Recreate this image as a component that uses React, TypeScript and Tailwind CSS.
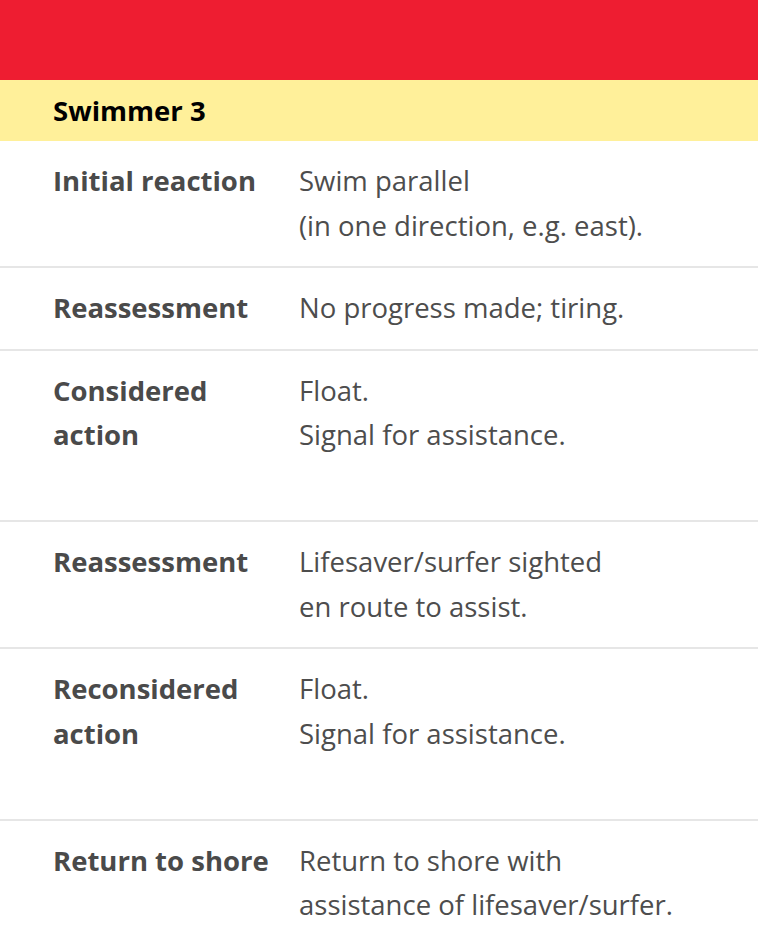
const rows: { label: string; lines: string[] }[] = [
  { label: 'Initial reaction', lines: ['Swim parallel', '(in one direction, e.g. east).'] },
  { label: 'Reassessment', lines: ['No progress made; tiring.'] },
  { label: 'Considered action', lines: ['Float.', 'Signal for assistance.', ''] },
  { label: 'Reassessment', lines: ['Lifesaver/surfer sighted', 'en route to assist.'] },
  { label: 'Reconsidered action', lines: ['Float.', 'Signal for assistance.', ''] },
  { label: 'Return to shore', lines: ['Return to shore with', 'assistance of lifesaver/surfer.'] },
];

const App = () => {
  return (
    <div className="w-[758px] bg-white font-['Open_Sans',sans-serif]">
      <div className="h-[80px] bg-[#ee1d31]" />
      <div className="h-[61px] bg-[#fff09a] pl-[53px] flex items-center">
        <h2 className="text-[27.5px] font-bold text-black">Swimmer 3</h2>
      </div>
      {rows.map((row, i) => (
        <div
          key={i}
          className="grid grid-cols-[246px_1fr] pl-[53px] py-[18px] border-b-2 border-[#e6e6e6] text-[27.5px] leading-[44.5px]"
        >
          <div className="font-bold text-[#4a4a4a] pr-4">{row.label}</div>
          <div className="text-[#4d4d4d]">
            {row.lines.map((line, j) => (
              <div key={j} className="h-[44.5px] whitespace-nowrap">
                {line}
              </div>
            ))}
          </div>
        </div>
      ))}
    </div>
  );
};

export default App;
